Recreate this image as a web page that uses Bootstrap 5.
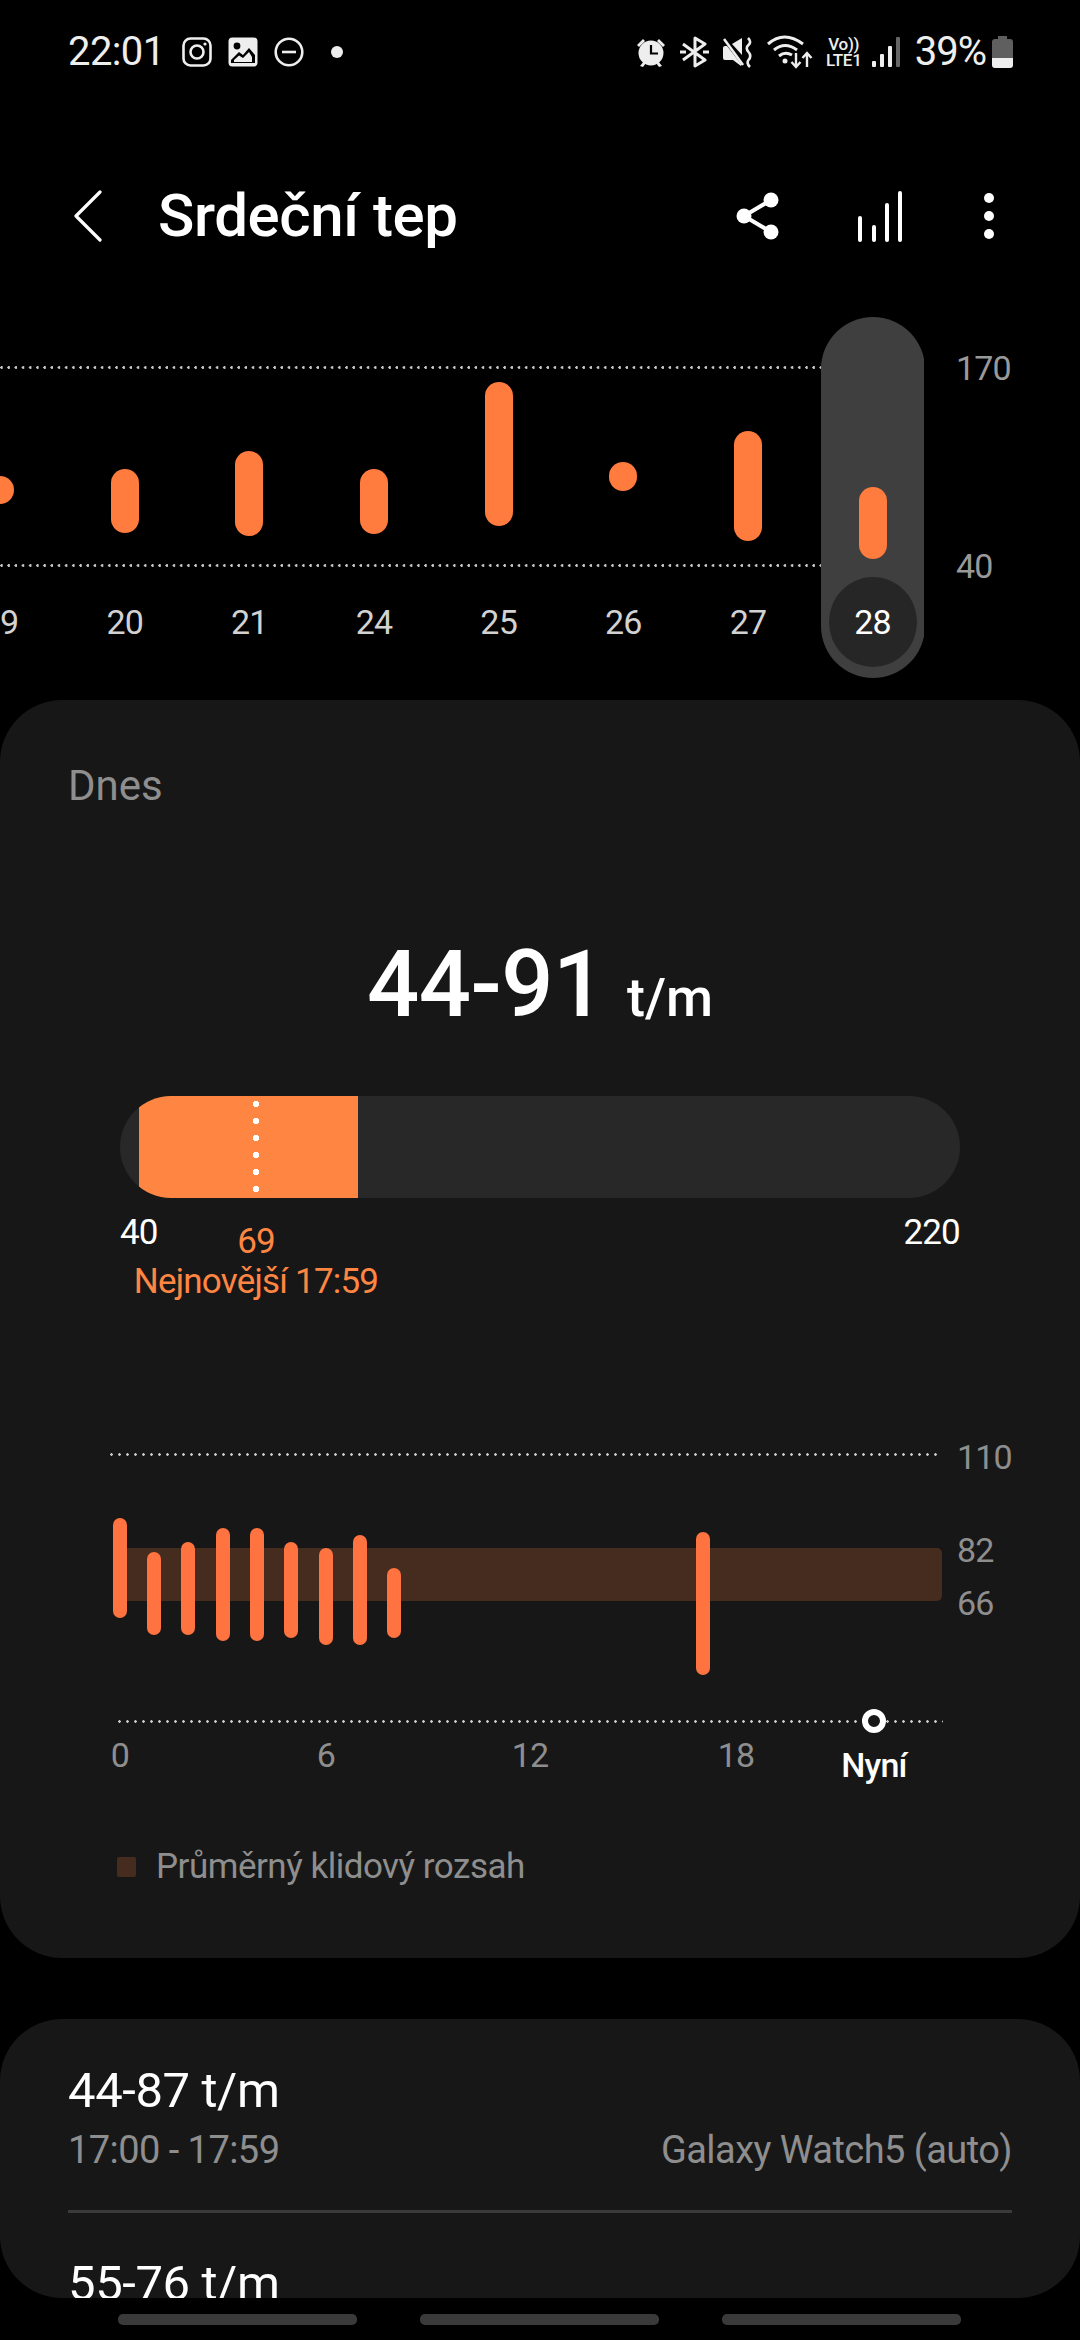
<!DOCTYPE html>
<html lang="cs">
<head>
<meta charset="UTF-8">
<meta name="viewport" content="width=device-width, initial-scale=1.0">
<title>Srdeční tep</title>
<link rel="stylesheet" href="https://cdn.jsdelivr.net/npm/bootstrap@5.3.0/dist/css/bootstrap.min.css">
<script src="https://cdn.jsdelivr.net/npm/bootstrap@5.3.0/dist/js/bootstrap.bundle.min.js"></script>
<style>
    html, body { background: #000; }
    body {
        width: 1080px;
        height: 2340px;
        overflow: hidden;
        font-family: Roboto, "Noto Sans", sans-serif;
        color: #fff;
    }
    svg { display: block; flex: none; }

    /* status bar */
    .status-row { height: 104px; padding: 0 67px 0 68px; color: #eee; }
    .status-time { font-size: 40px; letter-spacing: -.6px; line-height: 1; width: 114px; }
    .status-pct { font-size: 40px; letter-spacing: -1px; line-height: 1; }
    .volte-txt { font-size: 17px; line-height: 16px; font-weight: 500; text-align: center; width: 40px; letter-spacing: -.3px; }

    /* title bar */
    .topbar { height: 60px; margin: 82px 0 71px; padding-left: 74px; }
    .topbar-title { font-size: 60px; font-weight: 500; margin-left: 56px; line-height: 60px; letter-spacing: -.4px; }

    /* trend chart */
    .trend { height: 383px; }
    .trend-days { width: 924px; overflow: hidden; }
    .trend-line { position: absolute; left: 0; width: 822px; height: 3px; }
    .dotline {
        background-image: radial-gradient(circle at 1.5px 1.5px, #c8c8c8 1.2px, transparent 1.5px);
        background-size: 7.2px 3px;
        background-repeat: repeat-x;
    }
    .day-strip { margin-left: -62.300px; width: 1000px; }
    .day-col { width: 124.670px; height: 361px; position: relative; flex: none; }
    .day-plot { height: 285px; position: relative; }
    .day-bar { width: 28px; border-radius: 14px; background: #ff7b3e; }
    .day-num { height: 40px; line-height: 40px; text-align: center; font-size: 34px; color: #d2d2d2; position: relative; letter-spacing: -.8px; }
    .day-sel .day-num { color: #fff; }
    .sel-pill { position: absolute; left: 10.300px; width: 104px; top: 0; height: 361px; background: #3f3f3f; border-radius: 52px; }
    .sel-disc { position: absolute; left: 8px; top: 260px; width: 88px; height: 90px; border-radius: 50%; background: #262626; }
    .axis-txt { font-size: 34px; line-height: 40px; color: #999; letter-spacing: -.8px; }
    .trend-axis { margin-left: 32px; padding-top: 31px; }

    /* panels */
    .panel { background: #171717; border: 0; border-radius: 62px; color: #fff; overflow: hidden; }
    .panel > * { flex: none; }
    .panel-today { height: 1258px; padding-top: 64px; }
    .panel-list { height: 279px; margin-top: 61px; padding: 45px 68px 0; }
    .today-label { font-size: 42px; line-height: 44px; color: #8e8e8e; padding-left: 68px; }
    .today-value { margin-top: 127px; line-height: 100px; font-weight: 500; font-size: 92px; }
    .today-num { letter-spacing: -.5px; }
    .today-unit { font-size: 54px; margin-left: 22px; line-height: 1; }

    /* range bar */
    .range-track { margin: 61px 120px 0; height: 102px; border-radius: 51px; background: #282828; overflow: hidden; }
    .range-fill { margin-left: 19px; width: 219px; height: 102px; background: #ff8642; position: relative; }
    .range-dots { position: absolute; top: 5px; height: 96px; width: 6px; left: 114px;
        background-image: radial-gradient(circle at 3px 3px, #fff 3px, transparent 3.4px);
        background-size: 6px 17px; background-repeat: repeat-y; }
    .range-labels { margin: 15px 120px 0; height: 228px; font-size: 35px; line-height: 40px; letter-spacing: -.8px; }
    .range-latest { color: #ff8642; width: 260px; margin: -31px 0 0 6px; text-align: center; white-space: nowrap; }

    /* hourly chart */
    .hour-row { height: 350px; padding-left: 110px; }
    .hour-plot { width: 833px; height: 350px; position: relative; flex: none; }
    .hour-line { position: absolute; left: 0; top: 12px; width: 831px; height: 3px; }
    .hour-dotline { background-size: 8px 3px; }
    .rest-band { position: absolute; left: 4px; width: 828px; top: 107px; height: 53px; background: #452c1f; border-radius: 5px; }
    .hour-bar { position: absolute; width: 14px; border-radius: 7px; background: #ff7340; }
    .hour-axis-line { position: absolute; left: 8px; top: 279px; width: 825px; height: 3px; }
    .now-dot { position: absolute; left: 752px; top: 268px; width: 24px; height: 24px; border-radius: 50%; border: 6px solid #fff; background: #171717; }
    .hour-tick { position: absolute; top: 294px; width: 80px; text-align: center; font-size: 34px; line-height: 40px; color: #8e8e8e; letter-spacing: -.8px; }
    .hour-now { top: 304px; color: #fff; font-weight: 500; }
    .hour-axis { width: 70px; margin-left: 14px; }
    .hour-axis .axis-txt { color: #8e8e8e; position: relative; }

    .legend-row { padding-left: 117px; margin-top: 56px; gap: 20px; }
    .legend-swatch { width: 19px; height: 20px; background: #452c1f; border-radius: 2px; }
    .legend-txt { font-size: 35px; line-height: 40px; color: #8e8e8e; letter-spacing: -.5px; }

    /* list */
    .entry-range { font-size: 49px; line-height: 54px; letter-spacing: -.4px; }
    .entry-meta { margin-top: 10px; font-size: 38px; line-height: 44px; color: #8e8e8e; letter-spacing: -.55px; }
    .entry-sep { height: 3px; background: #3a3a3a; margin: 38px 0 44px; }

    /* nav hint */
    .nav-hints { margin-top: 16px; padding-left: 118px; gap: 63px; }
    .nav-hint { width: 239px; height: 11px; border-radius: 5px; background: #3a3a3a; }
</style>
</head>
<body>
    <div class="status-row d-flex align-items-center">
        <div class="status-time">22:01</div>
        <svg width="30" height="30" viewBox="0 0 30 30" fill="none" stroke="#eee" stroke-width="2.6"><rect x="1.5" y="1.5" width="27" height="27" rx="7"/><circle cx="15" cy="15" r="6.5"/><circle cx="23" cy="7" r="1.6" fill="#eee" stroke="none"/></svg>
        <svg class="ms-3" width="30" height="30" viewBox="0 0 30 30"><rect x=".5" y=".5" width="29" height="29" rx="4" fill="#eee"/><circle cx="9" cy="9" r="3.4" fill="#000"/><path d="M3 23 L11 15 L15 18 L21 11 L27 18 V26 H3 Z M6 25 H24 V20 L21 15 L15 21 L11 18.500 L6 23 Z" fill="#000" fill-rule="evenodd"/></svg>
        <svg class="ms-3" width="30" height="30" viewBox="0 0 30 30" fill="none" stroke="#eee" stroke-width="2.6"><circle cx="15" cy="15" r="13.300"/><path d="M8 15 H22"/></svg>
        <svg style="margin-left:27px" width="12" height="12" viewBox="0 0 12 12"><circle cx="6" cy="6" r="6" fill="#eee"/></svg>

        <div class="ms-auto d-flex align-items-center">
            <svg width="30" height="30" viewBox="0 0 30 30" fill="#eee"><circle cx="15" cy="16" r="12.500"/><path d="M1 8 L7 2 L9 4 L3 10 Z M29 8 L23 2 L21 4 L27 10 Z M4 29 L8 24 L10 26 L7 30 Z M26 29 L22 24 L20 26 L23 30 Z"/><path d="M15 8 V16.500 H22" fill="none" stroke="#000" stroke-width="2.200"/></svg>
            <svg style="margin-left:14px" width="29" height="32" viewBox="0 0 29 32" fill="none" stroke="#eee" stroke-width="3" stroke-linejoin="round"><path d="M3 8 L25 24 L15 30 V2 L25 8 L3 24"/><path d="M0 16 H6 M23 16 H29" stroke-width="3"/></svg>
            <svg style="margin-left:14px" width="31" height="31" viewBox="0 0 31 31" fill="#eee"><path d="M0 11 Q0 9 2 9 H4 L18 27 V29 L10 23 H2 Q0 23 0 21 Z"/><path d="M9 7 L19 1 V18 Z"/><path d="M1 2 L20 28" stroke="#eee" stroke-width="2.600"/><path d="M25 1 Q29 5 25.500 8 Q22 11 25.500 15 Q29 19 25.500 23 Q23 26 27 30" fill="none" stroke="#eee" stroke-width="2.600"/></svg>
            <svg style="margin-left:13px" width="46" height="34" viewBox="0 0 46 34" fill="none" stroke="#eee" stroke-width="3"><path d="M1 9 Q17 -5 36 9"/><path d="M7 15 Q18 6 30 15"/><path d="M12 21 Q18 16 25 20"/><circle cx="18" cy="26" r="2.500" fill="#eee" stroke="none"/><path d="M29 18 V32 M24.500 27 L29 32 L33.500 27" stroke-width="2.400"/><path d="M40 32 V18 M35.500 23 L40 18 L44.500 23" stroke-width="2.400"/></svg>
            <div class="volte-txt" style="margin-left:11px"><div>Vo))</div><div>LTE1</div></div>
            <svg class="ms-2" width="28" height="30" viewBox="0 0 28 30"><rect x="0" y="24" width="4" height="6" rx="1" fill="#eee"/><rect x="8" y="17" width="4" height="13" rx="1" fill="#eee"/><rect x="16" y="9" width="4" height="21" rx="1" fill="#eee"/><rect x="24" y="0" width="4" height="30" rx="1" fill="#666"/></svg>
            <div class="status-pct" style="margin-left:15px">39%</div>
            <svg style="margin-left:6px" width="21" height="32" viewBox="0 0 21 32"><path d="M6 0 H15 V3 H18 Q21 3 21 6 V22 H0 V6 Q0 3 3 3 H6 Z" fill="#5f5f5f"/><path d="M0 22 H21 V29 Q21 32 18 32 H3 Q0 32 0 29 Z" fill="#eee"/></svg>
        </div>
    </div>

    <div class="topbar d-flex align-items-center">
        <svg width="28" height="52" viewBox="0 0 28 52" fill="none" stroke="#fff" stroke-width="3.200" stroke-linecap="round" stroke-linejoin="round"><path d="M26 2 L2 26 L26 50"/></svg>
        <div class="topbar-title">Srdeční tep</div>
        <div class="ms-auto d-flex align-items-center" style="margin-right:86px">
            <svg width="44" height="48" viewBox="0 0 44 48" fill="#fff" stroke="#fff"><path d="M35 8 L8 24 L35 40" fill="none" stroke-width="4"/><circle cx="35" cy="8" r="7.500" stroke="none"/><circle cx="35" cy="40" r="7.500" stroke="none"/><circle cx="8" cy="24" r="7.500" stroke="none"/></svg>
            <svg style="margin-left:77px" width="46" height="52" viewBox="0 0 46 52" fill="#fff"><rect x="1" y="26" width="4" height="26" rx="2"/><rect x="15" y="35" width="4" height="17" rx="2"/><rect x="28" y="13" width="4" height="39" rx="2"/><rect x="41" y="1" width="4" height="51" rx="2"/></svg>
            <svg style="margin-left:81px" width="10" height="46" viewBox="0 0 10 46" fill="#fff"><circle cx="5" cy="5" r="5"/><circle cx="5" cy="23" r="5"/><circle cx="5" cy="41" r="5"/></svg>
        </div>
    </div>

    <div class="trend d-flex">
        <div class="trend-days position-relative">
            <div class="trend-line dotline" style="top:49px"></div>
            <div class="trend-line dotline" style="top:247px"></div>
            <div class="day-strip d-flex position-relative">
                <div class="day-col"><div class="day-plot d-flex justify-content-center"><div class="day-bar" style="margin-top:159px;height:28px"></div></div><div class="day-num">19</div></div>
                <div class="day-col"><div class="day-plot d-flex justify-content-center"><div class="day-bar" style="margin-top:152px;height:64px"></div></div><div class="day-num">20</div></div>
                <div class="day-col"><div class="day-plot d-flex justify-content-center"><div class="day-bar" style="margin-top:134px;height:85px"></div></div><div class="day-num">21</div></div>
                <div class="day-col"><div class="day-plot d-flex justify-content-center"><div class="day-bar" style="margin-top:152px;height:65px"></div></div><div class="day-num">24</div></div>
                <div class="day-col"><div class="day-plot d-flex justify-content-center"><div class="day-bar" style="margin-top:65px;height:144px"></div></div><div class="day-num">25</div></div>
                <div class="day-col"><div class="day-plot d-flex justify-content-center"><div class="day-bar" style="margin-top:145px;height:29px"></div></div><div class="day-num">26</div></div>
                <div class="day-col"><div class="day-plot d-flex justify-content-center"><div class="day-bar" style="margin-top:114px;height:110px"></div></div><div class="day-num">27</div></div>
                <div class="day-col day-sel"><div class="sel-pill"><div class="sel-disc"></div></div><div class="day-plot d-flex justify-content-center"><div class="day-bar" style="margin-top:170px;height:72px"></div></div><div class="day-num">28</div></div>
            </div>
        </div>
        <div class="trend-axis">
            <div class="axis-txt">170</div>
            <div class="axis-txt" style="margin-top:158px">40</div>
        </div>
    </div>

    <div class="card panel panel-today">
        <div class="today-label">Dnes</div>
        <div class="today-value text-center"><span class="today-num">44-91</span><span class="today-unit">t/m</span></div>

        <div class="range-track">
            <div class="range-fill"><div class="range-dots"></div></div>
        </div>
        <div class="range-labels">
            <div class="d-flex justify-content-between"><span>40</span><span>220</span></div>
            <div class="range-latest">
                <div>69</div>
                <div>Nejnovější 17:59</div>
            </div>
        </div>

        <div class="hour-row d-flex">
            <div class="hour-plot">
                <div class="hour-line dotline hour-dotline"></div>
                <div class="rest-band"></div>
                <div class="hour-bar" style="left:3px;top:77px;height:100px"></div>
                <div class="hour-bar" style="left:37px;top:111px;height:83px"></div>
                <div class="hour-bar" style="left:71px;top:101px;height:93px"></div>
                <div class="hour-bar" style="left:106px;top:87px;height:113px"></div>
                <div class="hour-bar" style="left:140px;top:87px;height:113px"></div>
                <div class="hour-bar" style="left:174px;top:101px;height:96px"></div>
                <div class="hour-bar" style="left:209px;top:107px;height:97px"></div>
                <div class="hour-bar" style="left:243px;top:94px;height:110px"></div>
                <div class="hour-bar" style="left:277px;top:127px;height:70px"></div>
                <div class="hour-bar" style="left:586px;top:91px;height:143px"></div>
                <div class="hour-axis-line dotline hour-dotline"></div>
                <div class="now-dot"></div>
                <div class="hour-tick" style="left:-30px">0</div>
                <div class="hour-tick" style="left:176px">6</div>
                <div class="hour-tick" style="left:380px">12</div>
                <div class="hour-tick" style="left:586px">18</div>
                <div class="hour-tick hour-now" style="left:724px">Nyní</div>
            </div>
            <div class="hour-axis">
                <div class="axis-txt" style="margin-top:-4px">110</div>
                <div class="axis-txt" style="margin-top:53px">82</div>
                <div class="axis-txt" style="margin-top:13px">66</div>
            </div>
        </div>

        <div class="legend-row d-flex align-items-center">
            <div class="legend-swatch"></div>
            <div class="legend-txt">Průměrný klidový rozsah</div>
        </div>
    </div>

    <div class="card panel panel-list">
        <div class="entry-range">44-87 t/m</div>
        <div class="entry-meta d-flex justify-content-between"><span>17:00 - 17:59</span><span>Galaxy Watch5 (auto)</span></div>
        <div class="entry-sep"></div>
        <div class="entry-range">55-76 t/m</div>
    </div>

    <div class="nav-hints d-flex">
        <div class="nav-hint"></div>
        <div class="nav-hint"></div>
        <div class="nav-hint"></div>
    </div>
</body>
</html>
